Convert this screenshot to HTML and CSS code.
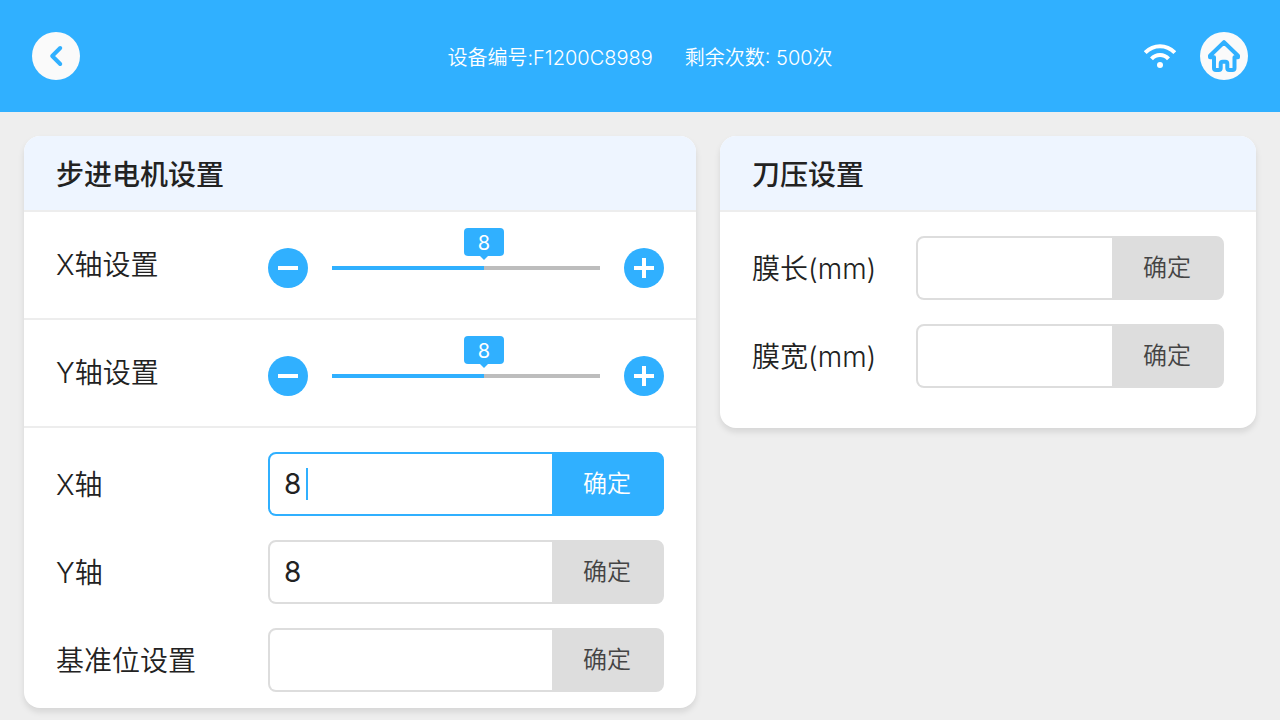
FILE: index.html
```html
<!DOCTYPE html>
<html lang="zh-CN">
<head>
<meta charset="utf-8">
<meta name="viewport" content="width=device-width, initial-scale=1">
<title>电机设置</title>
<link rel="stylesheet" href="styles.css">
</head>
<body>
<header class="topbar">
  <button class="round-btn" type="button" aria-label="返回">
    <svg viewBox="0 0 48 48" fill="none" stroke="currentColor" stroke-width="4" stroke-linecap="round" stroke-linejoin="round"><path d="M28.2 16L20.2 24l8 8"/></svg>
  </button>
  <div class="device">
    <span>设备编号:F1200C8989</span>
    <span>剩余次数: 500次</span>
  </div>
  <div class="actions">
    <svg class="wifi" viewBox="0 0 32 24" fill="none" stroke="currentColor" stroke-width="4" role="img" aria-label="无线网络"><path d="M1.2 8.6C9.6 0 22.4 0 30.8 8.6"/><path d="M7.5 14.8c4.6-5.2 12.4-5.2 17 0"/><circle cx="16" cy="21" r="3" fill="currentColor" stroke="none"/></svg>
    <button class="round-btn" type="button" aria-label="主页">
      <svg viewBox="0 0 48 48" fill="none" stroke="currentColor" stroke-width="4" stroke-linecap="round" stroke-linejoin="round"><path d="M24 10.200L10 23.800v1.400h4V36a2 2 0 0 0 2 2h2.700a2 2 0 0 0 2-2v-4.300a2 2 0 0 1 2-2h2.600a2 2 0 0 1 2 2V36a2 2 0 0 0 2 2H32.500a2 2 0 0 0 2-2V25.200H38v-1.400z"/></svg>
    </button>
  </div>
</header>

<main class="page">
  <section class="card">
    <h2 class="card-title">步进电机设置</h2>
    <div class="slider-row">
      <label class="label" for="sx">X轴设置</label>
      <div class="stepper">
        <button class="step" type="button" aria-label="减少X轴"><svg viewBox="0 0 40 40"><path d="M10 18h20v4H10z"/></svg></button>
        <div class="slider" style="--pos:56.7%">
          <output class="bubble" for="sx">8</output>
          <input class="range" id="sx" type="range" min="0" max="14" value="8">
        </div>
        <button class="step" type="button" aria-label="增加X轴"><svg viewBox="0 0 40 40"><path d="M10 18h8v-8h4v8h8v4h-8v8h-4v-8h-8z"/></svg></button>
      </div>
    </div>
    <div class="slider-row">
      <label class="label" for="sy">Y轴设置</label>
      <div class="stepper">
        <button class="step" type="button" aria-label="减少Y轴"><svg viewBox="0 0 40 40"><path d="M10 18h20v4H10z"/></svg></button>
        <div class="slider" style="--pos:56.7%">
          <output class="bubble" for="sy">8</output>
          <input class="range" id="sy" type="range" min="0" max="14" value="8">
        </div>
        <button class="step" type="button" aria-label="增加Y轴"><svg viewBox="0 0 40 40"><path d="M10 18h8v-8h4v8h8v4h-8v8h-4v-8h-8z"/></svg></button>
      </div>
    </div>
    <div class="fields">
      <div class="field">
        <label class="label" for="x">X轴</label>
        <div class="group active"><input class="text" id="x" type="text" value="8"><span class="caret" aria-hidden="true"></span><button class="confirm" type="button">确定</button></div>
      </div>
      <div class="field">
        <label class="label" for="y">Y轴</label>
        <div class="group"><input class="text" id="y" type="text" value="8"><button class="confirm" type="button">确定</button></div>
      </div>
      <div class="field">
        <label class="label" for="base">基准位设置</label>
        <div class="group"><input class="text" id="base" type="text"><button class="confirm" type="button">确定</button></div>
      </div>
    </div>
  </section>

  <section class="card pressure">
    <h2 class="card-title">刀压设置</h2>
    <div class="fields">
      <div class="field">
        <label class="label" for="len">膜长(mm)</label>
        <div class="group"><input class="text" id="len" type="text"><button class="confirm" type="button">确定</button></div>
      </div>
      <div class="field">
        <label class="label" for="wid">膜宽(mm)</label>
        <div class="group"><input class="text" id="wid" type="text"><button class="confirm" type="button">确定</button></div>
      </div>
    </div>
  </section>
</main>
</body>
</html>
```

FILE: styles.css
```css
:root {
  --blue: #30b0ff;
  --grey: #dddddd;
  --line: #ededed;
  --label-width: 212px;
}

* { box-sizing: border-box; }

body {
  margin: 0;
  min-height: 100vh;
  background: #eeeeee;
  color: #222;
  font-family: Inter, "Noto Sans CJK SC", sans-serif;
  font-weight: 360;
}

button, input {
  margin: 0;
  padding: 0;
  border: 0;
  font: inherit;
  color: inherit;
}

button { cursor: pointer; }
svg { display: block; }

.topbar {
  display: grid;
  grid-template-columns: 1fr auto 1fr;
  align-items: center;
  padding: 32px;
  background: var(--blue);
  color: #fff;
}

.round-btn {
  width: 48px;
  height: 48px;
  border-radius: 50%;
  background: #fafafa;
  color: var(--blue);
}

.device {
  display: flex;
  gap: 32px;
  padding-top: 4px;
  font-size: 20px;
  line-height: 28px;
}

.actions {
  display: flex;
  justify-content: flex-end;
  align-items: center;
  gap: 24px;
}

.wifi { width: 32px; height: 24px; }

.page {
  display: grid;
  grid-template-columns: 84fr 67fr;
  align-items: start;
  gap: 24px;
  padding: 24px 24px 12px;
}

.card {
  overflow: hidden;
  border-radius: 16px;
  background: #fff;
  box-shadow: 0 4px 6px rgba(0, 0, 0, 0.1);
}

.card-title {
  margin: 0;
  padding: 19px 32px 15px;
  border-bottom: 2px solid var(--line);
  background: #eef5ff;
  font-size: 28px;
  line-height: 40px;
  font-weight: 500;
}

.label {
  flex: 0 0 var(--label-width);
  font-size: 28px;
  line-height: 40px;
}

.slider-row {
  display: flex;
  align-items: center;
  height: 108px;
  padding: 0 32px;
  border-bottom: 2px solid var(--line);
}

.stepper {
  display: flex;
  flex: 1;
  align-items: center;
  gap: 24px;
  padding-top: 6px;
}

.step {
  flex: none;
  width: 40px;
  height: 40px;
  border-radius: 50%;
  background: var(--blue);
  color: #fff;
}

.step svg { fill: currentColor; }

.slider {
  position: relative;
  display: flex;
  flex: 1;
  height: 40px;
}

.range {
  width: 100%;
  height: 40px;
  appearance: none;
  background: linear-gradient(to right, var(--blue) var(--pos), #bdbdbd var(--pos)) center / 100% 4px no-repeat;
}

.range::-webkit-slider-thumb {
  appearance: none;
  width: 24px;
  height: 40px;
  background: transparent;
}

.bubble {
  position: absolute;
  bottom: 32px;
  left: var(--pos);
  width: 40px;
  height: 28px;
  margin-left: -20px;
  border-radius: 4px;
  background: var(--blue);
  color: #fff;
  font-size: 20px;
  line-height: 30px;
  font-weight: 400;
  text-align: center;
}

.bubble::after {
  content: "";
  position: absolute;
  top: 100%;
  left: 50%;
  margin-left: -4px;
  border: 4px solid transparent;
  border-top-color: var(--blue);
  border-bottom: 0;
}

.fields {
  display: grid;
  grid-template-columns: minmax(0, 1fr);
  gap: 24px;
  padding: 24px 32px 16px;
}

.field { display: flex; align-items: center; }
.field .label { padding-top: 2px; }

.group {
  position: relative;
  display: flex;
  flex: 1;
  min-width: 0;
  height: 64px;
  overflow: hidden;
  border: 2px solid var(--grey);
  border-radius: 8px;
  background: var(--grey);
}

.text {
  flex: 1;
  min-width: 0;
  padding: 0 14px;
  background: #fff;
  font-size: 28px;
  font-weight: 400;
  outline: none;
}

.caret {
  position: absolute;
  top: 14px;
  left: 36px;
  width: 2px;
  height: 32px;
  background: var(--blue);
}

.confirm {
  flex: 0 0 110px;
  padding-bottom: 5px;
  background: var(--grey);
  color: #444;
  font-size: 24px;
}

.active { border-color: var(--blue); background: var(--blue); }
.active .confirm { background: var(--blue); color: #fff; }

.pressure { --label-width: 164px; }
.pressure .fields { padding-bottom: 40px; }
```
